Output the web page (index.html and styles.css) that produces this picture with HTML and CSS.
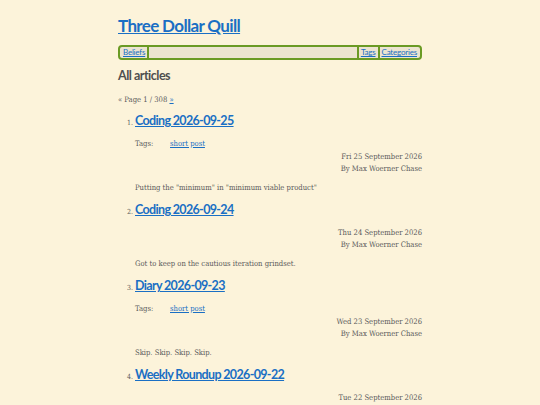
FILE: index.html
```html
<!DOCTYPE html>
<html lang="en">
<head>
<meta charset="utf-8">
<title>Three Dollar Quill</title>
<link rel="stylesheet" href="styles.css">
</head>
<body>
<div class="page">
  <header class="site-header">
    <h1 class="site-title"><a href="#">Three Dollar Quill</a></h1>
    <nav class="nav">
      <a class="nav-item" href="#">Beliefs</a>
      <span class="nav-spacer"></span>
      <a class="nav-item nav-sep" href="#">Tags</a>
      <a class="nav-item nav-sep" href="#">Categories</a>
    </nav>
  </header>
  <main>
    <h2 class="section-title">All articles</h2>
    <p class="pager">« Page 1 / 308 <a href="#">»</a></p>
    <ol class="articles">
      <li class="article">
        <h3 class="article-title"><a href="#">Coding 2026-09-25</a></h3>
        <div class="tags"><span class="tags-label">Tags:</span><a href="#">short post</a></div>
        <div class="meta"><div>Fri 25 September 2026</div><div>By Max Woerner Chase</div></div>
        <p class="summary">Putting the "minimum" in "minimum viable product"</p>
      </li>
      <li class="article">
        <h3 class="article-title"><a href="#">Coding 2026-09-24</a></h3>
        <div class="meta"><div>Thu 24 September 2026</div><div>By Max Woerner Chase</div></div>
        <p class="summary">Got to keep on the cautious iteration grindset.</p>
      </li>
      <li class="article">
        <h3 class="article-title"><a href="#">Diary 2026-09-23</a></h3>
        <div class="tags"><span class="tags-label">Tags:</span><a href="#">short post</a></div>
        <div class="meta"><div>Wed 23 September 2026</div><div>By Max Woerner Chase</div></div>
        <p class="summary">Skip. Skip. Skip. Skip.</p>
      </li>
      <li class="article">
        <h3 class="article-title"><a href="#">Weekly Roundup 2026-09-22</a></h3>
        <div class="meta"><div>Tue 22 September 2026</div><div>By Max Woerner Chase</div></div>
        <p class="summary">Another week.</p>
      </li>
    </ol>
  </main>
</div>
</body>
</html>
```

FILE: styles.css
```css
html, body {
  margin: 0;
  padding: 0;
  background: #fcf3da;
}
body {
  font-family: "DejaVu Serif", serif;
  font-stretch: condensed;
  font-size: 7.6px;
  line-height: 12px;
  color: #5a5a5a;
}
a { color: #1a6fc4; }
.page {
  width: 304px;
  margin: 0 auto;
  padding-top: 15px;
}
.site-title {
  font-family: "Lato", sans-serif;
  font-stretch: normal;
  font-weight: 700;
  font-size: 17px;
  letter-spacing: -0.65px;
  line-height: 22px;
  margin: 0 0 8px 0;
}
.nav {
  display: flex;
  align-items: stretch;
  border: 2px solid #6a9a24;
  border-radius: 4px;
  background: #ece4d0;
  font-family: "Lato", sans-serif;
  font-stretch: normal;
  font-size: 8px;
  letter-spacing: -0.2px;
  line-height: 11px;
  padding: 0 1px;
}
.nav-item {
  padding: 0 2px;
}
.nav-spacer {
  flex: 1;
  border-left: 2px solid #6a9a24;
  border-right: 2px solid #6a9a24;
}
.nav-sep + .nav-sep {
  border-left: 2px solid #6a9a24;
}
.section-title {
  font-family: "Lato", sans-serif;
  font-stretch: normal;
  font-weight: 700;
  font-size: 12.5px;
  letter-spacing: -0.5px;
  line-height: 16px;
  color: #4f4f4f;
  margin: 8px 0 0 0;
}
.pager {
  margin: 10px 0 0 0;
}
.articles {
  margin: 7px 0 0 0;
  padding-left: 17px;
}
.article::marker {
  font-size: 7px;
}
.article-title {
  font-family: "Lato", sans-serif;
  font-stretch: normal;
  font-weight: 700;
  font-size: 12.5px;
  letter-spacing: -0.65px;
  line-height: 16px;
  margin: 0 0 8px 0;
}
.tags {
  display: flex;
  line-height: 13px;
}
.tags-label {
  width: 35px;
}
.meta {
  text-align: right;
  padding-top: 1px;
}
.summary {
  margin: 7px 0 8px 0;
}
```
